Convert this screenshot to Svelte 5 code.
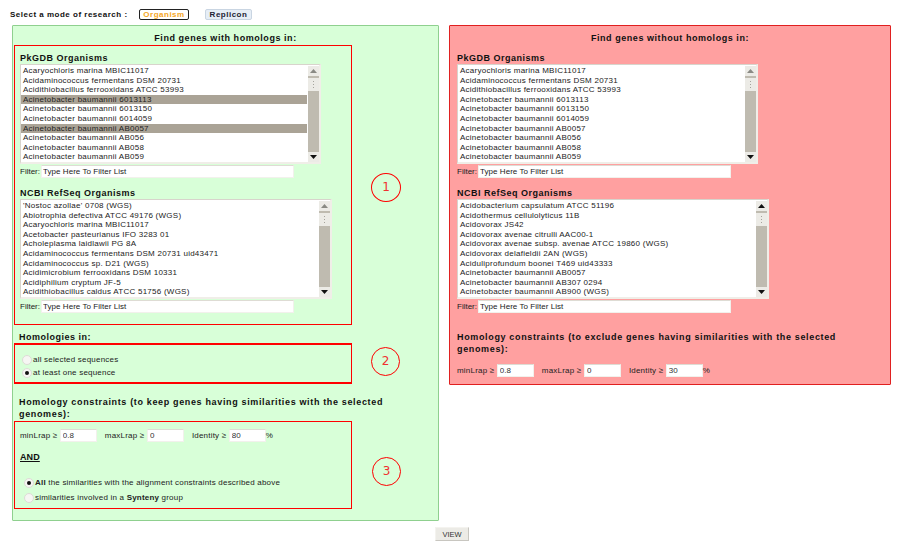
<script>
	const pkgdb = [
		'Acaryochloris marina MBIC11017',
		'Acidaminococcus fermentans DSM 20731',
		'Acidithiobacillus ferrooxidans ATCC 53993',
		'Acinetobacter baumannii 6013113',
		'Acinetobacter baumannii 6013150',
		'Acinetobacter baumannii 6014059',
		'Acinetobacter baumannii AB0057',
		'Acinetobacter baumannii AB056',
		'Acinetobacter baumannii AB058',
		'Acinetobacter baumannii AB059'
	];
	const refseqLeft = [
		"'Nostoc azollae' 0708 (WGS)",
		'Abiotrophia defectiva ATCC 49176 (WGS)',
		'Acaryochloris marina MBIC11017',
		'Acetobacter pasteurianus IFO 3283 01',
		'Acholeplasma laidlawii PG 8A',
		'Acidaminococcus fermentans DSM 20731 uid43471',
		'Acidaminococcus sp. D21 (WGS)',
		'Acidimicrobium ferrooxidans DSM 10331',
		'Acidiphilium cryptum JF-5',
		'Acidithiobacillus caldus ATCC 51756 (WGS)'
	];
	const refseqRight = [
		'Acidobacterium capsulatum ATCC 51196',
		'Acidothermus cellulolyticus 11B',
		'Acidovorax JS42',
		'Acidovorax avenae citrulli AAC00-1',
		'Acidovorax avenae subsp. avenae ATCC 19860 (WGS)',
		'Acidovorax delafieldii 2AN (WGS)',
		'Aciduliprofundum boonei T469 uid43333',
		'Acinetobacter baumannii AB0057',
		'Acinetobacter baumannii AB307 0294',
		'Acinetobacter baumannii AB900 (WGS)'
	];
	const picked = [3, 6];
</script>

{#snippet orgList(items, selected, wide, upColor)}
	<div class="list" class:wide>
		<div class="rows">
			{#each items as name, i}
				<div class="row" class:sel={selected.includes(i)}>{name}</div>
			{/each}
		</div>
		<div class="scroll">
			<div class="sbtn"><svg width="7" height="4" viewBox="0 0 7 4"><path d="M3.5 0 7 4H0z" fill={upColor} /></svg></div>
			<div class="thumb"><i></i><i></i><i></i></div>
			<div class="track"></div>
			<div class="sbtn"><svg width="7" height="4" viewBox="0 0 7 4"><path d="M0 0h7L3.5 4z" fill="#111" /></svg></div>
		</div>
	</div>
	<div class="filter"><span>Filter:</span><input value="Type Here To Filter List" /></div>
{/snippet}

{#snippet thresholds(min, max, id)}
	<div class="thresholds">
		<span>minLrap ≥</span><input class="num" value={min} />
		<span class="lab">maxLrap ≥</span><input class="num" value={max} />
		<span class="lab">Identity ≥</span><input class="num" value={id} />
		<span>%</span>
	</div>
{/snippet}

<div class="page">
	<div class="mode">
		<b>Select a mode of research :</b>
		<span class="tab on">Organism</span>
		<span class="tab">Replicon</span>
	</div>

	<div class="panels">
		<section class="panel green">
			<h2>Find genes with homologs in:</h2>
			<div class="box one">
				<h3>PkGDB Organisms</h3>
				{@render orgList(pkgdb, picked, false, '#8a8a84')}
				<h3 class="second">NCBI RefSeq Organisms</h3>
				{@render orgList(refseqLeft, [], true, '#8a8a84')}
				<div class="circle c1">1</div>
			</div>

			<h3 class="outside">Homologies in:</h3>
			<div class="box two">
				<label><span class="radio"></span>all selected sequences</label>
				<label><span class="radio on"></span>at least one sequence</label>
				<div class="circle c2">2</div>
			</div>

			<h3 class="outside long">Homology constraints (to keep genes having similarities with the selected genomes):</h3>
			<div class="box three">
				{@render thresholds('0.8', '0', '80')}
				<div class="and">AND</div>
				<label class="opt"><span class="radio on"></span><span><b>All</b> the similarities with the alignment constraints described above</span></label>
				<label class="opt"><span class="radio"></span><span>similarities involved in a <b>Synteny</b> group</span></label>
				<div class="circle c3">3</div>
			</div>
		</section>

		<section class="panel red">
			<h2>Find genes without homologs in:</h2>
			<div class="plain">
				<h3>PkGDB Organisms</h3>
				{@render orgList(pkgdb, [], false, '#8a8a84')}
				<h3 class="second">NCBI RefSeq Organisms</h3>
				{@render orgList(refseqRight, [], true, '#111')}
				<h3 class="constraints">Homology constraints (to exclude genes having similarities with the selected genomes):</h3>
				{@render thresholds('0.8', '0', '30')}
			</div>
		</section>
	</div>

	<div class="actions"><button>VIEW</button></div>
</div>

<style>
	:global(body) {
		margin: 0;
		background: #fff;
	}

	.page {
		width: 900px;
		height: 546px;
		overflow: hidden;
		box-sizing: border-box;
		font-family: 'Liberation Sans', Arial, sans-serif;
		font-size: 8px;
		color: #222;
	}

	.mode {
		display: flex;
		align-items: flex-start;
		height: 25px;
		padding: 9px 0 0 10px;
		box-sizing: border-box;
	}

	.mode b {
		font: bold 8px/11px 'Liberation Sans', Arial, sans-serif;
		letter-spacing: 0.5px;
		color: #111;
		width: 129px;
		white-space: nowrap;
	}

	.tab {
		box-sizing: border-box;
		height: 11px;
		text-align: center;
		font: bold 8px/9px 'Liberation Sans', Arial, sans-serif;
		letter-spacing: 0.5px;
		border: 1px solid #c9d5e2;
		background: #e6eef6;
		border-radius: 2px;
		width: 47px;
		color: #223;
	}

	.tab.on {
		width: 50px;
		margin-right: 16px;
		border-color: #222;
		background: #fff;
		color: #f5a623;
	}

	.panels {
		display: flex;
		align-items: flex-start;
		gap: 10px;
		padding-left: 12px;
	}

	.panel {
		box-sizing: border-box;
		padding: 0 1px;
		border-radius: 1px;
	}

	.green {
		width: 427px;
		height: 496px;
		background: #d8ffd8;
		border: 1px solid #8fd08f;
	}

	.red {
		width: 442px;
		height: 360px;
		background: #ffa0a0;
		border: 1px solid #e02020;
	}

	h2 {
		margin: 0;
		height: 19px;
		text-align: center;
		font: bold 9px/24px 'Liberation Sans', Arial, sans-serif;
		letter-spacing: 0.55px;
		color: #111;
	}

	h3 {
		margin: 0;
		font: bold 9px/11px 'Liberation Sans', Arial, sans-serif;
		letter-spacing: 0.5px;
		color: #111;
	}

	h3.second {
		margin-top: 10px;
	}

	.box {
		position: relative;
		box-sizing: border-box;
		width: 338px;
		border: 1px solid #f00;
		padding: 0 5px;
	}

	.one {
		height: 280px;
		padding-top: 7px;
	}

	.plain {
		padding: 8px 6px 0;
	}

	.outside {
		margin: 7px 0 0 5px;
	}

	.outside.long {
		margin: 12px 0 1px 5px;
		width: 372px;
		line-height: 12px;
		letter-spacing: 0.65px;
	}

	.two {
		height: 41px;
		border-top-width: 2px;
		border-bottom-width: 2px;
		padding-top: 8px;
		padding-left: 7px;
	}

	.three {
		height: 88px;
		padding-top: 7px;
	}

	.list {
		box-sizing: border-box;
		display: flex;
		width: 301px;
		height: 100px;
		background: #fff;
		border: 1px solid #d8d4cc;
		border-right: 2px solid #f0eee8;
		border-bottom: 2px solid #f0eee8;
	}

	.list.wide {
		width: 312px;
	}

	.rows {
		flex: 1;
		padding-top: 1px;
		min-width: 0;
	}

	.row {
		height: 9.62px;
		line-height: 9.62px;
		padding-left: 2px;
		font-size: 8px;
		letter-spacing: 0.25px;
		white-space: nowrap;
		color: #222;
	}

	.row.sel {
		background: #aaa396;
	}

	.scroll {
		width: 11px;
		margin: 1px 0 0 1px;
		display: flex;
		flex-direction: column;
		background: #bfbbb0;
	}

	.sbtn {
		height: 10px;
		display: flex;
		align-items: center;
		justify-content: center;
		background: #ecebe6;
	}

	.thumb {
		height: 13px;
		margin-top: 2px;
		display: flex;
		flex-direction: column;
		align-items: center;
		justify-content: center;
		gap: 2px;
		background: #ecebe6;
	}

	.thumb i {
		width: 1px;
		height: 1px;
		background: #a5a39c;
	}

	.track {
		flex: 1;
	}

	.filter {
		display: flex;
		align-items: center;
		height: 13px;
		margin-top: 1px;
		gap: 1px;
		font-size: 8px;
	}

	.filter input {
		box-sizing: border-box;
		width: 253px;
		height: 13px;
		margin: 0;
		padding: 0 1px;
		font: 8px 'Liberation Sans', Arial, sans-serif;
		letter-spacing: 0.05px;
		color: #222;
		background: #fff;
		border: 1px solid #f2f1ec;
		border-top-color: #dedcd4;
		border-radius: 0;
		outline: none;
	}

	label {
		display: flex;
		align-items: center;
		height: 13px;
		font-size: 8px;
		letter-spacing: 0.2px;
		gap: 1px;
	}

	.radio {
		box-sizing: border-box;
		display: inline-block;
		position: relative;
		width: 10px;
		height: 10px;
		border-radius: 50%;
		background: #f6f6f3;
		border: 1px solid #dedcd6;
		flex: none;
	}

	.radio.on::after {
		content: '';
		position: absolute;
		left: 2px;
		top: 2px;
		width: 4px;
		height: 4px;
		border-radius: 50%;
		background: #111;
	}

	.thresholds {
		display: flex;
		align-items: center;
		height: 13px;
		font-size: 8px;
		letter-spacing: 0.2px;
	}

	.thresholds .num {
		box-sizing: border-box;
		width: 37px;
		height: 13px;
		margin: 0 0 0 2.5px;
		padding: 0 2px;
		font: 8px 'Liberation Sans', Arial, sans-serif;
		color: #333;
		background: #fff;
		border: 1px solid #f2f1ec;
		border-top-color: #dedcd4;
		border-radius: 0;
		outline: none;
	}

	.lab {
		margin-left: 8px;
	}

	.and {
		margin: 9.5px 0 12.5px;
		font: bold 9px/11px 'Liberation Sans', Arial, sans-serif;
		letter-spacing: 0.1px;
		text-decoration: underline;
		color: #111;
	}

	.opt {
		height: 15px;
		padding-left: 4px;
	}

	.constraints {
		margin-top: 19px;
		width: 420px;
		line-height: 11.5px;
		letter-spacing: 0.65px;
	}

	.red .thresholds {
		margin-top: 9px;
	}

	.circle {
		position: absolute;
		left: 356px;
		box-sizing: border-box;
		width: 29px;
		height: 29px;
		border-radius: 50%;
		border: 1px solid #f00;
		color: #f03030;
		text-align: center;
		font: 12px/26px 'DejaVu Sans', sans-serif;
	}

	.c1 {
		top: 127px;
		width: 30px;
		border-width: 1.5px;
	}

	.c2 {
		top: 2px;
	}

	.c3 {
		top: 35px;
		left: 357px;
	}

	.actions {
		display: flex;
		padding: 6px 0 0 435px;
	}

	button {
		box-sizing: border-box;
		width: 34px;
		height: 14px;
		padding: 0;
		font: 7.5px 'Liberation Sans', Arial, sans-serif;
		color: #333;
		background: #ecebe6;
		border: 1px solid #f4f3ef;
		border-right-color: #c8c6c0;
		border-bottom-color: #c8c6c0;
	}
</style>
